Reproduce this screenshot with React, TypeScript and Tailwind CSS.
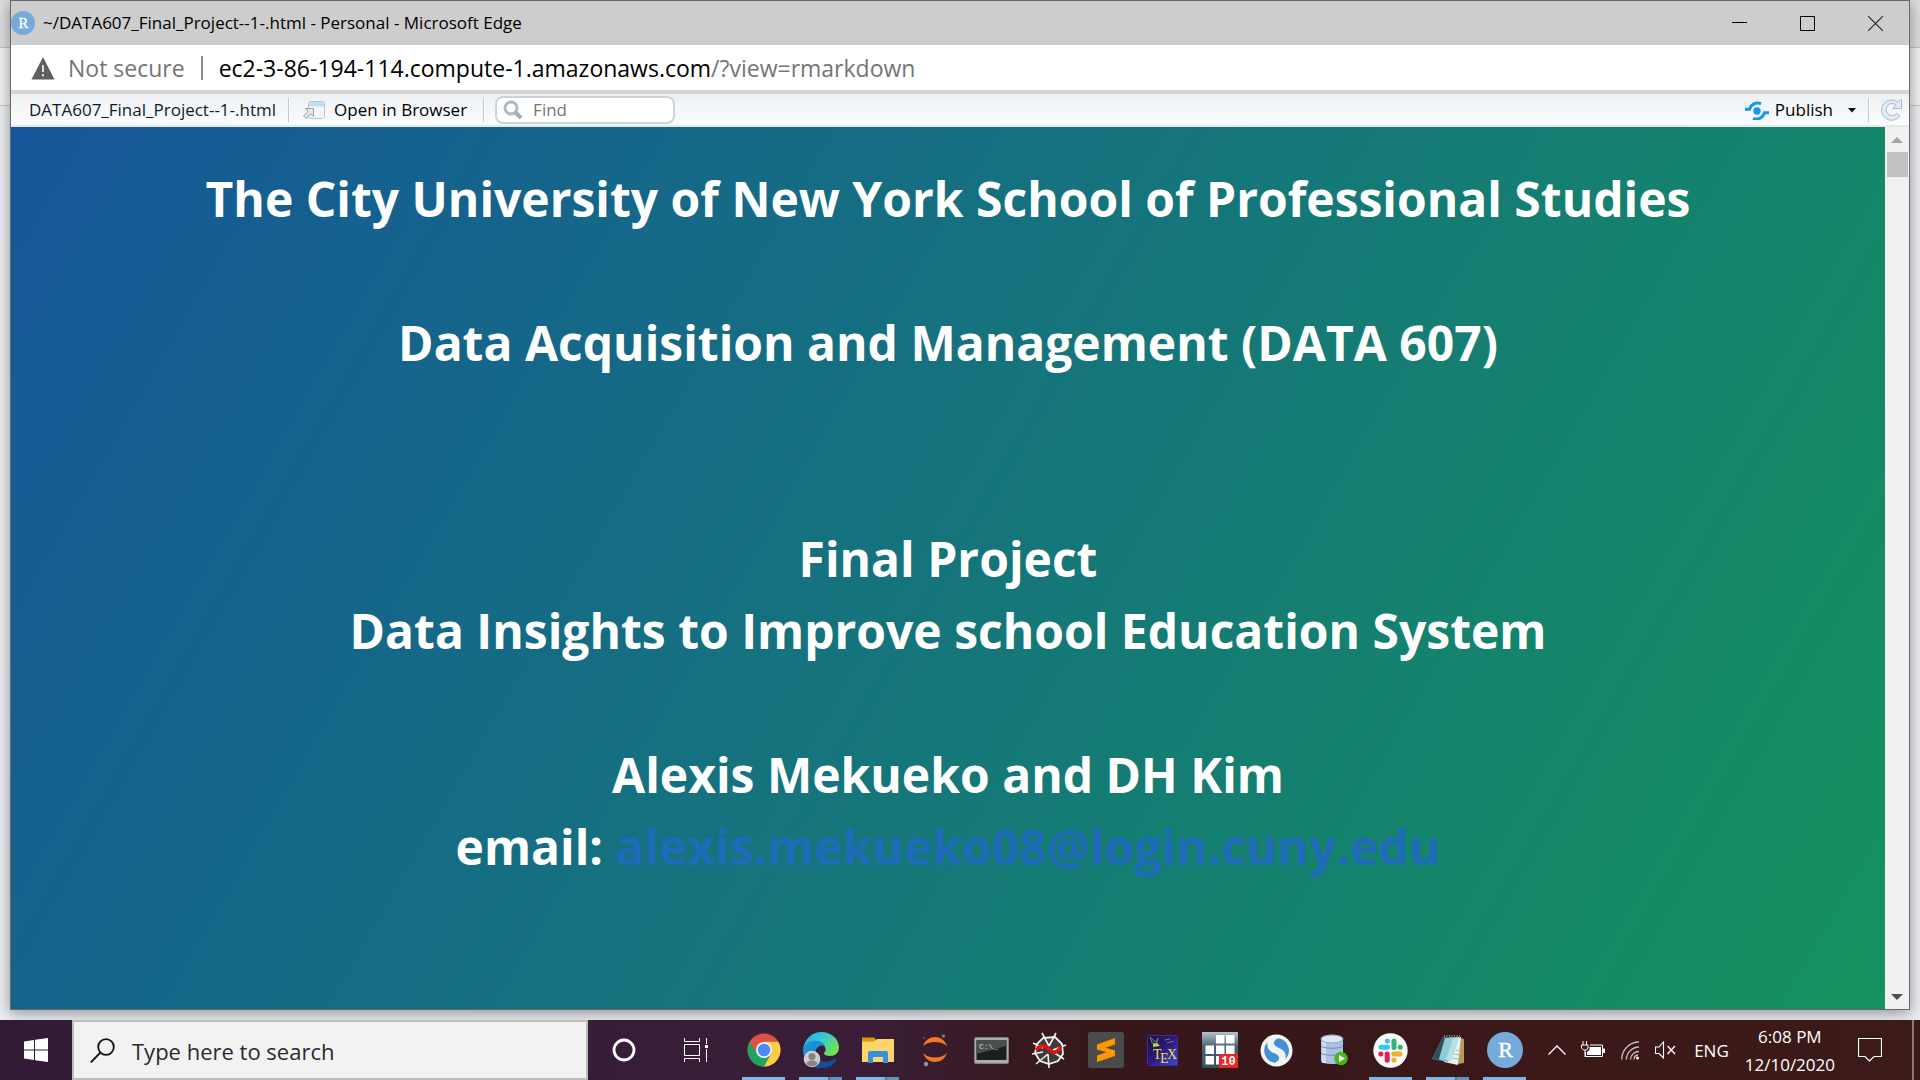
import type { ReactNode } from "react";

const SANS = "font-['Open_Sans','Noto_Sans',sans-serif]";

function StudioBadge({ size }: { size: number }) {
  return (
    <svg width={size} height={size} viewBox="0 0 36 36" aria-hidden="true">
      <circle cx="18" cy="18" r="18" fill="#75aadb" />
      <text x="18.5" y="25" textAnchor="middle" fontSize="22" fill="#fff" stroke="#fff" strokeWidth=".4" fontFamily="Liberation Serif, serif">
        R
      </text>
    </svg>
  );
}

function TitleBar() {
  return (
    <header className="flex h-11 shrink-0 items-center bg-[#cdcdcd] text-black">
      <StudioBadge size={24} />
      <h1 className="ml-2 flex-1 text-[17px] leading-6 whitespace-nowrap">
        ~/DATA607_Final_Project--1-.html - Personal - Microsoft Edge
      </h1>
      <button aria-label="Minimize" className="flex h-full w-[68px] items-center justify-center">
        <svg width="15" height="15" viewBox="0 0 15 15"><path d="M0 6.5h15" stroke="#000" /></svg>
      </button>
      <button aria-label="Maximize" className="flex h-full w-[68px] items-center justify-center">
        <svg width="15" height="15" viewBox="0 0 15 15"><path d="M.5.5h14v14H.5z" stroke="#000" fill="none" /></svg>
      </button>
      <button aria-label="Close" className="flex h-full w-[68px] items-center justify-center">
        <svg width="15" height="15" viewBox="0 0 15 15"><path d="M0 0l15 15M15 0L0 15" stroke="#222" strokeWidth="1.1" /></svg>
      </button>
    </header>
  );
}

function AddressBar() {
  return (
    <div className="flex h-[45px] shrink-0 items-center bg-white pl-5 text-[23px] leading-8 whitespace-nowrap text-[#757575]">
      <svg width="24" height="24" viewBox="0 0 24 24" aria-hidden="true">
        <path d="M12 1L23.5 23.5H.5z" fill="#5f5f5f" />
        <path d="M12 9v7M12 18v2.2" stroke="#fff" strokeWidth="1.6" />
      </svg>
      <span className="ml-[13px]">Not secure</span>
      <span className="mx-4 h-6 w-0.5 bg-[#8a8a8a]" />
      <span>
        <span className="text-black">ec2-3-86-194-114.compute-1.amazonaws.com</span>/?view=rmarkdown
      </span>
    </div>
  );
}

function ToolbarRule() {
  return <span className="h-6 w-0.5 border-r border-white bg-[#c4c8cb]" />;
}

function Toolbar() {
  return (
    <div className="flex h-[37px] shrink-0 items-center border-t-4 border-b-2 border-t-[#d4d5d7] border-b-[#e6e9ec] bg-linear-to-b from-[#eef1f4] to-[#fbfcfd] pl-[18px] text-[17px] leading-6 whitespace-nowrap text-black">
      <span className="text-[#0c1c2c]">DATA607_Final_Project--1-.html</span>
      <span className="ml-3 flex"><ToolbarRule /></span>
      <button className="ml-3 flex items-center gap-2">
        <svg width="24" height="20" viewBox="0 0 24 20" aria-hidden="true">
          <rect x="6.5" y="1.5" width="16" height="17" rx="2" fill="#f3f6fa" stroke="#b9c6d2" />
          <path d="M7 4a2 2 0 012-2h11a2 2 0 012 2v2.500H7z" fill="#c3ddf3" />
          <path d="M3.500 8.500h8v8l-2.600-2.600-4.900 4.600-2.500-2.500 4.800-4.700z" fill="#e2e7ea" stroke="#94a1aa" />
        </svg>
        Open in Browser
      </button>
      <span className="ml-4 flex"><ToolbarRule /></span>
      <label className="ml-2.5 flex h-7 w-[180px] items-center rounded-lg border-2 border-[#cdd3d8] bg-white pl-1.5">
        <svg width="20" height="20" viewBox="0 0 20 20" aria-hidden="true">
          <circle cx="8" cy="8" r="6" fill="none" stroke="#b0b9be" strokeWidth="3" />
          <path d="M12.500 12.500l5.500 5.500" stroke="#a4adb2" strokeWidth="4" />
        </svg>
        <input aria-label="Find" placeholder="Find" className="ml-2.5 w-28 min-w-0 bg-transparent outline-none placeholder:text-[#757575]" />
      </label>
      <button className="ml-auto flex items-center">
        <svg width="24" height="20" viewBox="0 0 24 20" aria-hidden="true">
          <circle cx="12" cy="11" r="3.700" fill="#0f9aee" />
          <path d="M0 9.300h4.500c1.500-5 6-7.600 11.500-5.800" fill="none" stroke="#0f9aee" strokeWidth="3" />
          <path d="M24 12.700h-4.500c-1.500 5-6 7.600-11.500 5.800" fill="none" stroke="#0f9aee" strokeWidth="3" />
        </svg>
        <span className="ml-1.5">Publish</span>
        <svg className="ml-[15px]" width="8" height="6" viewBox="0 0 8 6" aria-hidden="true"><path d="M0 1h8L4 5.500z" fill="#111" /></svg>
      </button>
      <span className="ml-3 flex"><ToolbarRule /></span>
      <button aria-label="Refresh" className="mr-1.5 ml-2.5">
        <svg width="23" height="23" viewBox="0 0 23 23">
          <path d="M18 4.200L20.500 1.500h1V10.500h-9l3.500-3.600a6 6 0 10.600 8.600l3.400 2.400a10.200 10.200 0 11-2-13.700z" fill="#e0e9f6" stroke="#adb9cc" />
        </svg>
      </button>
    </div>
  );
}

function Slide() {
  return (
    <main className="flex-1 overflow-hidden bg-linear-[120deg,#155799,#159957] bg-size-[100%_155%] bg-no-repeat px-6 pt-9 text-center font-['Open_Sans',sans-serif] text-5xl leading-[72px] font-bold text-white">
      <h2>The City University of New York School of Professional Studies</h2>
      <h2 className="mt-[72px]">Data Acquisition and Management (DATA 607)</h2>
      <h2 className="mt-36">Final Project</h2>
      <h2>Data Insights to Improve school Education System</h2>
      <p className="mt-[72px]">Alexis Mekueko and DH Kim</p>
      <p>
        email:{" "}
        <a href="mailto:alexis.mekueko08@login.cuny.edu" className="text-[#1e6bb8]">alexis.mekueko08@login.cuny.edu</a>
      </p>
    </main>
  );
}

function ScrollTrack() {
  return (
    <div className="flex w-6 shrink-0 flex-col items-center bg-[#f1f1f1]">
      <button aria-label="Scroll up" className="flex h-[25px] w-full items-center justify-center">
        <svg width="12" height="6" viewBox="0 0 12 6"><path d="M0 6h12L6 0z" fill="#a3a3a3" /></svg>
      </button>
      <span className="h-[25px] w-[21px] bg-[#c1c1c1]" />
      <button aria-label="Scroll down" className="mt-auto flex h-6 w-full items-center justify-center">
        <svg width="12" height="6" viewBox="0 0 12 6"><path d="M0 0h12L6 6z" fill="#505050" /></svg>
      </button>
    </div>
  );
}

function Backdrop() {
  return (
    <div className="absolute inset-0 flex flex-col bg-[#eceef2]" aria-hidden="true">
      <div className="h-12 border-b border-[#c4c4c4] bg-[#dedede]" />
      <div className="h-[58px] border-b border-[#c9c9c9] bg-[#f2f2f2]" />
    </div>
  );
}

const ChromeIcon = (
  <svg width="34" height="34" viewBox="0 0 34 34">
    <circle cx="17" cy="17" r="16.500" fill="#dd5144" />
    <path d="M2.700 8.800A16.500 16.500 0 0017 33.500L24.100 21.100 9.900 21.100z" fill="#1da362" />
    <path d="M17 33.500A16.500 16.500 0 0031.300 8.800H17l7.100 12.300z" fill="#ffcd46" />
    <circle cx="17" cy="17" r="8" fill="#f4f4f4" />
    <circle cx="17" cy="17" r="6.300" fill="#4c8bf5" />
  </svg>
);

const EdgeIcon = (
  <svg width="36" height="36" viewBox="0 0 36 36">
    <defs>
      <linearGradient id="edgeTop" x1="0" y1="0" x2="1" y2=".6">
        <stop offset="0" stopColor="#2aa7dd" />
        <stop offset=".5" stopColor="#35c7d3" />
        <stop offset="1" stopColor="#6fe254" />
      </linearGradient>
      <linearGradient id="edgeLow" x1="0" y1="0" x2=".7" y2="1">
        <stop offset="0" stopColor="#1b9de2" />
        <stop offset="1" stopColor="#1173c5" />
      </linearGradient>
    </defs>
    <path d="M0 18C1 7 9 0 18.500 0 28 0 36 7 36 15.500c0 5-4 8.500-9 8.500-3.500 0-6-1-6-2.500 0-1 2-2 1.500-5C21.800 12 17 9 12 9 6 9 1.500 12.500 0 18z" fill="url(#edgeTop)" />
    <path d="M0 18C1.500 12 6.500 8.500 12 8.800c5.500.2 9.500 3 10 6-2-2.500-7.500-1.300-9 3.200-2.500 8 4 15 13 14-2.500 2.500-6 4-9 4C7 35.500 0 28 0 18z" fill="url(#edgeLow)" />
    <path d="M12.700 18c-1.200 8 5 13 12.300 11.500 4.500-1 7-3.500 8.500-2.500.5 1-3 9-15.500 9-7 0-11-9-9-15z" fill="#114f98" />
    <circle cx="9" cy="27" r="8.300" fill="#cfcfcf" />
    <circle cx="9" cy="24.500" r="3.600" fill="#8a8580" />
    <path d="M3.500 32c.5-5 10.500-5 11 0-3 3-8 3-11 0z" fill="#8a8580" />
  </svg>
);

const FolderIcon = (
  <svg width="34" height="28" viewBox="0 0 34 28">
    <path d="M1 1.500h12l3 3.500v4H1z" fill="#dd9a06" />
    <path d="M1 5.500h12l3-2.500h17v23H1z" fill="#fdd56a" />
    <path d="M7 27V17q0-2 2-2h16q2 0 2 2v10h-5v-6H12v6z" fill="#3990da" />
  </svg>
);

const JupyterIcon = (
  <svg width="27" height="34" viewBox="0 0 27 34">
    <path d="M2 13C6 1 22 1 26 13 20 7.500 8 7.500 2 13zM2 20c4 12 20 12 24 0-6 6-18 6-24 0z" fill="#f37726" />
    <circle cx="22.500" cy="3" r="1.800" fill="#767677" />
    <circle cx="5" cy="31" r="2.200" fill="#989798" />
    <circle cx="3" cy="5" r="1" fill="#616262" />
  </svg>
);

const ConsoleIcon = (
  <svg width="35" height="27" viewBox="0 0 35 27">
    <rect x=".5" y=".5" width="34" height="26" rx="1.500" fill="#a9adad" stroke="#7b7f80" />
    <rect x="2.500" y="3" width="30" height="20" fill="#1b1f1f" />
    <path d="M2.500 3h30v6l-30 8z" fill="#4a4e4e" />
    <text x="5" y="12" fontSize="8" fill="#d8d8d8" fontFamily="Liberation Mono, monospace">C:\_</text>
  </svg>
);

const SpyderIcon = (
  <svg width="36" height="36" viewBox="0 0 36 36" fill="none" stroke="#f2f2f2">
    <path d="M12 6L24 5l7 7 1 10-5 7-9 3-9-3-5-8 2-9z" fill="#3d3a3a" strokeWidth="1.800" />
    <path d="M18 14L11 1M18 14l7-13M22 18l13-5M22 20l11 7M17 22l1 14M17 22L5 32M12 20L1 22M12 16L2 11" strokeWidth="1.600" />
    <path d="M5 18c5-6 9-5 13-1 4 5 8 5 12-3" stroke="#ee1010" strokeWidth="3.500" />
  </svg>
);

const SublimeIcon = (
  <svg width="36" height="36" viewBox="0 0 36 36">
    <rect width="36" height="36" rx="2.500" fill="#4b4b4b" />
    <path d="M9 12.500L27 6v6.500l-9.500 3.300L27 18.500V24L9 30v-6.500l9.500-3.200L9 17.500z" fill="#ff9800" />
  </svg>
);

const TexIcon = (
  <svg width="31" height="31" viewBox="0 0 31 31">
    <defs>
      <linearGradient id="texSky" x1="0" y1="0" x2="1" y2="1">
        <stop offset="0" stopColor="#14103a" />
        <stop offset=".5" stopColor="#2e197c" />
        <stop offset="1" stopColor="#3550d8" />
      </linearGradient>
    </defs>
    <rect x=".5" y=".5" width="30" height="30" rx="1" fill="url(#texSky)" stroke="#4326a8" />
    <path d="M3 2l6 5 2-4-1 6-5-1zM18 5l5-1M20 8l7-2" stroke="#777" fill="#333" />
    <path d="M6 9l4-1 3 3-7 1z" fill="#b8e03a" />
    <g fill="#f2dc4d" fontFamily="Liberation Serif, serif" fontSize="14">
      <text x="6" y="24">T</text>
      <text x="13" y="28">E</text>
      <text x="20" y="24">X</text>
    </g>
  </svg>
);

const GridIcon = (
  <svg width="36" height="36" viewBox="0 0 36 36" overflow="visible">
    <defs>
      <linearGradient id="gridTone" x1="0" y1="0" x2="0" y2="1">
        <stop offset="0" stopColor="#b4c3cb" />
        <stop offset=".4" stopColor="#496675" />
        <stop offset="1" stopColor="#345162" />
      </linearGradient>
    </defs>
    <rect width="36" height="36" fill="url(#gridTone)" />
    <path d="M14 3h8.500v8.500H14zM24 3h8.500v8.500H24zM3.500 13.500H12V22H3.500zM14 13.500h8.500V22H14zM24 13.500h8.500V22H24zM3.500 24H12v8.500H3.500zM14 24h8.500v8.500H14z" fill="#fff" />
    <rect x="17" y="22" width="19" height="14" fill="#ee2424" />
    <text x="26.500" y="33" textAnchor="middle" fontSize="12" fontWeight="bold" fill="#fff" fontFamily="Liberation Mono, monospace">10</text>
  </svg>
);

const SimplenoteIcon = (
  <svg width="33" height="33" viewBox="0 0 33 33">
    <circle cx="16.500" cy="16.500" r="16" fill="#f4f4f2" />
    <path d="M18.500 4.300A12.500 12.500 0 0125.500 25.200C27 18 22 15 18 13.500 12.500 11.500 12.500 6 18.500 4.300z" fill="#4590d5" />
    <path d="M7.500 8C6 15 11 18 15 19.500c5.500 2 5.500 7.500-.5 9.200A12.500 12.500 0 017.500 8z" fill="#4590d5" />
  </svg>
);

const DatabaseIcon = (
  <svg width="28" height="32" viewBox="0 0 28 32">
    <path d="M1 5v22c0 4 22 4 22 0V5z" fill="#adc2e2" />
    <path d="M4 6v23" stroke="#cfdcf0" strokeWidth="4" />
    <path d="M1 12c2 3 20 3 22 0M1 19c2 3 20 3 22 0" stroke="#6f8db9" fill="none" />
    <ellipse cx="12" cy="5" rx="11" ry="4" fill="#dbe5f4" stroke="#90a9cf" />
    <circle cx="21" cy="24.500" r="6.700" fill="#49b51c" />
    <path d="M19 21l6 3.500-6 3.500z" fill="#fff" />
  </svg>
);

const SlackIcon = (
  <svg width="35" height="35" viewBox="0 0 35 35">
    <circle cx="17.500" cy="17.500" r="17.200" fill="#fafafa" />
    <g strokeWidth="5" strokeLinecap="round" fill="none">
      <path d="M8 14.200h6.500M14.300 8h.1" stroke="#36c5f0" />
      <path d="M21 8v6.500M27.200 14.200h.1" stroke="#2eb67d" />
      <path d="M20.800 21H27M20.900 27.300h.1" stroke="#ecb22e" />
      <path d="M14.200 21v6.300M7.800 21.100h.1" stroke="#e01e5a" />
    </g>
  </svg>
);

const NotepadIcon = (
  <svg width="34" height="32" viewBox="0 0 34 32">
    <path d="M29 4l4 1v24l-6 1z" fill="#b49a5c" />
    <path d="M13 3h17l-3 28-14-3z" fill="#e9f0f1" />
    <path d="M12 3h13l-8 25-16-3z" fill="#6fb3c4" />
    <path d="M12 3h7L8 26l-7-1z" fill="#2f5158" />
    <path d="M14 4h14l-8 23-12-2z" fill="#8fccd8" />
    <path d="M22 4h6l-8 23-5-1z" fill="#b9e0e6" />
    <path d="M25 16l3 .5M23 20l5 1M22 24l5 1" stroke="#a8b8bc" />
    <path d="M13 2.500h17" stroke="#8c8c8c" strokeWidth="3" strokeDasharray="1 1.500" />
  </svg>
);

type App = { name: string; icon: ReactNode; state?: "open" | "stacked" };

const apps: App[] = [
  { name: "Google Chrome", icon: ChromeIcon, state: "open" },
  { name: "Microsoft Edge", icon: EdgeIcon, state: "stacked" },
  { name: "File Explorer", icon: FolderIcon, state: "stacked" },
  { name: "Jupyter", icon: JupyterIcon },
  { name: "Command Prompt", icon: ConsoleIcon },
  { name: "Spyder", icon: SpyderIcon },
  { name: "Sublime Text", icon: SublimeIcon },
  { name: "TeX", icon: TexIcon },
  { name: "WinEdt", icon: GridIcon },
  { name: "Simplenote", icon: SimplenoteIcon },
  { name: "SQL Developer", icon: DatabaseIcon },
  { name: "Slack", icon: SlackIcon, state: "open" },
  { name: "Notepad", icon: NotepadIcon, state: "stacked" },
  { name: "RStudio", icon: <StudioBadge size={36} />, state: "open" },
];

function Taskbar() {
  return (
    <footer className="relative z-10 flex h-[60px] shrink-0 items-stretch bg-linear-[90deg,#311a36_0%,#3a1e38_45%,#36191c_54%,#351719_62%,#3c1819_80%,#3b1a19_100%] text-white">
      <button aria-label="Start" className="flex w-[72px] items-center justify-center">
        <svg width="24" height="24" viewBox="0 0 24 24" fill="#fff">
          <path d="M0 3.400L10 2v9.500H0zM11 1.800L24 0v11.500H11zM0 12.500h10V22L0 20.600zM11 12.500h13V24l-13-1.800z" />
        </svg>
      </button>
      <label className="flex w-[516px] items-center border-2 border-[#bdbdbd] bg-[#f2f2f2] pl-4">
        <svg width="25" height="25" viewBox="0 0 25 25" fill="none" stroke="#111" strokeWidth="1.800" aria-hidden="true">
          <circle cx="16" cy="9" r="7.800" />
          <path d="M10.500 14.500L.8 24.300" />
        </svg>
        <input
          aria-label="Search"
          placeholder="Type here to search"
          className="ml-[17px] min-w-0 flex-1 bg-transparent pt-0.5 text-[22px] leading-8 outline-none placeholder:text-[#2b2b2b]"
        />
      </label>
      <button aria-label="Cortana" className="flex w-[72px] items-center justify-center">
        <svg width="24" height="24" viewBox="0 0 24 24"><circle cx="12" cy="12" r="10" fill="none" stroke="#fff" strokeWidth="2.800" /></svg>
      </button>
      <button aria-label="Task view" className="flex w-[72px] items-center justify-center">
        <svg width="24" height="24" viewBox="0 0 24 24" fill="none" stroke="#fff">
          <path d="M.5 0v3.500h15V0M.5 6.500h15v11H.5zM.5 24v-3.500h15V24M22.500 0v6M22.500 11v13" />
          <path d="M21 7h3v3h-3z" fill="#fff" stroke="none" />
        </svg>
      </button>
      <nav aria-label="Apps" className="ml-[3px] flex">
        {apps.map((app) => (
          <button key={app.name} aria-label={app.name} className="flex w-[57px] flex-col items-center">
            <span className="flex h-[57px] items-center pt-[3px]">{app.icon}</span>
            {app.state && (
              <span className="flex h-[3px] w-[43px] bg-[#76b9ed]">
                {app.state === "stacked" && <span className="ml-auto w-3.5 border-l-2 border-[#4b7799] bg-[#6295bd]" />}
              </span>
            )}
          </button>
        ))}
      </nav>
      <div className="ml-auto flex items-center">
        <button aria-label="Show hidden icons" className="mr-[15px]">
          <svg width="18" height="12" viewBox="0 0 18 12"><path d="M.5 10.500L9 2l8.500 8.500" fill="none" stroke="#fff" strokeWidth="1.300" /></svg>
        </button>
        <svg className="mr-4" width="24" height="18" viewBox="0 0 24 18" role="img" aria-label="Battery charging">
          <path d="M9 4h12.500v11.500H4.500V11" fill="none" stroke="#fff" />
          <path d="M8.500 6h11.500v8H6v-3l2.500-2zM22 7.500h2v4.500h-2z" fill="#fff" />
          <path d="M2 0v4M5.500 0v4M.5 4h6.500v3L5.500 9h-3L.5 7zM4 9v7" fill="none" stroke="#fff" />
        </svg>
        <svg className="mr-[15px]" width="19" height="19" viewBox="0 0 19 19" fill="none" stroke="#c9babb" strokeWidth="1.300" role="img" aria-label="Wireless network">
          <path d="M.7 18.500A17.500 17.500 0 0118 1M5.300 18.500A13 13 0 0118 6M9.500 18.500A8.500 8.500 0 0118 10.500M13 18.500a4.500 4.500 0 014-4.500" />
          <circle cx="16.500" cy="17" r="1.500" fill="#fff" stroke="none" />
        </svg>
        <svg className="mr-[18px]" width="21" height="18" viewBox="0 0 21 18" fill="none" stroke="#fff" role="img" aria-label="Muted">
          <path d="M.5 6h3.500l4.500-5v16L4 12.500H.5z" strokeWidth="1.100" />
          <path d="M12.500 5l7.500 8M20 5l-7.500 8" strokeWidth="1.300" />
        </svg>
        <button className="pt-0.5 text-[17px] leading-7">ENG</button>
        <button className="ml-4 flex flex-col items-center pt-0.5 text-[17px] leading-7">
          <time>6:08 PM</time>
          <time>12/10/2020</time>
        </button>
        <button aria-label="Notifications" className="mr-[30px] ml-[23px]">
          <svg width="24" height="24" viewBox="0 0 24 24"><path d="M.5.500h23v18h-7.500L11.500 23 7 18.500H.5z" fill="none" stroke="#fff" strokeWidth="1.200" /></svg>
        </button>
        <button aria-label="Show desktop" className="h-[60px] w-2 border-l-2 border-[#8d7879]" />
      </div>
    </footer>
  );
}

export default function App() {
  return (
    <div className={`flex h-screen flex-col overflow-hidden ${SANS}`}>
      <div className="relative flex min-h-0 flex-1 px-2.5 pb-2.5">
        <Backdrop />
        <section className="relative flex min-w-0 flex-1 flex-col border border-[#67696b] shadow-[0_3px_14px_rgba(0,0,0,0.4)]">
          <TitleBar />
          <AddressBar />
          <Toolbar />
          <div className="flex min-h-0 flex-1">
            <Slide />
            <ScrollTrack />
          </div>
        </section>
      </div>
      <Taskbar />
    </div>
  );
}
